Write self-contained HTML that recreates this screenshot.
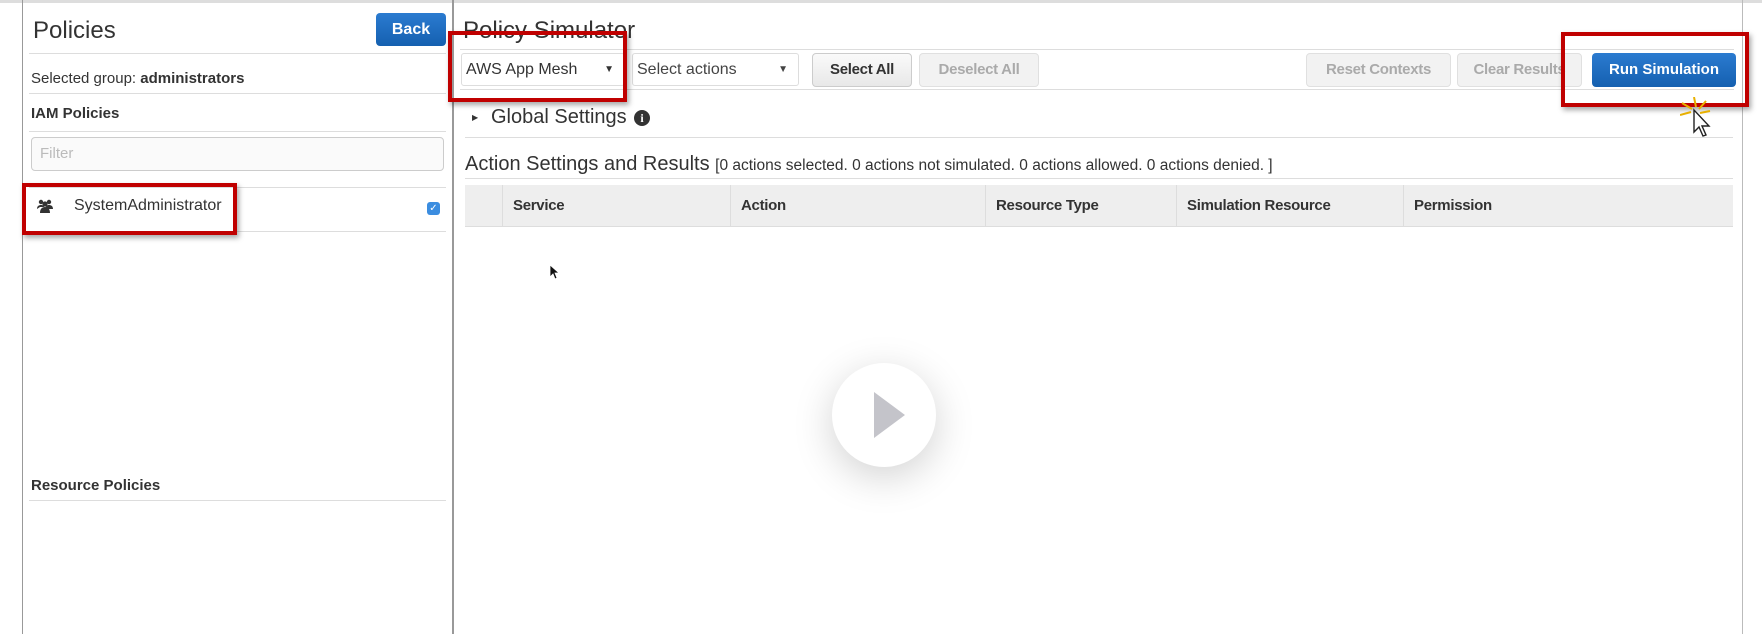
<!DOCTYPE html>
<html><head><meta charset="utf-8"><style>
*{box-sizing:border-box;margin:0;padding:0}
body{width:1762px;height:634px;background:#fff;position:relative;overflow:hidden;font-family:"Liberation Sans",Arial,sans-serif;color:#333}
.a{position:absolute}
.hl{position:absolute;height:1px;background:#ddd}
.btn{position:absolute;border:1px solid #ccc;border-radius:4px;background:linear-gradient(#fafafa,#e8e8e8);font-weight:bold;font-size:15px;text-align:center;letter-spacing:-0.3px}
.dis{color:#aaa;background:#f2f2f2;border-color:#e0e0e0}
.red{position:absolute;border:4px solid #c00000;box-shadow:2px 3px 5px rgba(0,0,0,.35)}
.th{position:absolute;top:185px;height:42px;line-height:42px;font-weight:bold;font-size:15px;border-left:1px solid #ddd;padding-left:10px;letter-spacing:-0.3px}
</style></head><body>
<div class="a" style="left:0;top:0;width:1762px;height:3px;background:#ddd"></div>
<div class="a" style="left:22px;top:0;width:1px;height:634px;background:#999"></div>
<div class="a" style="left:452px;top:0;width:2px;height:634px;background:#999"></div>
<div class="a" style="left:1742px;top:0;width:1px;height:634px;background:#bbb"></div>

<div class="a" style="left:33px;top:17px;font-size:24px;color:#333">Policies</div>
<div class="a" style="left:376px;top:13px;width:70px;height:33px;border-radius:4px;background:linear-gradient(#2b7bd0,#1560b0);color:#fff;font-weight:bold;font-size:16px;line-height:33px;text-align:center">Back</div>
<div class="hl" style="left:29px;top:53px;width:417px"></div>
<div class="a" style="left:31px;top:70px;font-size:15px">Selected group: <b>administrators</b></div>
<div class="hl" style="left:29px;top:93px;width:417px"></div>
<div class="a" style="left:31px;top:105px;font-size:15px;font-weight:bold">IAM Policies</div>
<div class="hl" style="left:29px;top:131px;width:417px"></div>
<div class="a" style="left:31px;top:137px;width:413px;height:34px;border:1px solid #ccc;border-radius:4px;background:#fafafa;color:#bbb;font-size:15px;line-height:32px;padding-left:8px">Filter</div>
<div class="hl" style="left:29px;top:187px;width:417px"></div>
<svg class="a" style="left:37px;top:199px" width="16" height="14" viewBox="0 0 16 14"><circle cx="4" cy="3" r="2.2" fill="#333"/><circle cx="12" cy="3" r="2.2" fill="#333"/><circle cx="8" cy="5" r="2.6" fill="#333"/><path d="M0 10c0-3 2-4 4-4s3 1 3 2H3z M9 8c0-1 1-2 3-2s4 1 4 4h-4z M3 14c0-4 2-6 5-6s5 2 5 6z" fill="#333"/></svg>
<div class="a" style="left:74px;top:197px;font-size:16px">SystemAdministrator</div>
<div class="a" style="left:427px;top:202px;width:13px;height:13px;border-radius:3px;background:#3b8de0;color:#fff;font-size:10px;line-height:13px;text-align:center">✓</div>
<div class="hl" style="left:29px;top:231px;width:417px"></div>
<div class="red" style="left:22px;top:183px;width:215px;height:52px"></div>

<div class="a" style="left:31px;top:477px;font-size:15px;font-weight:bold">Resource Policies</div>
<div class="hl" style="left:29px;top:500px;width:417px"></div>

<div class="a" style="left:463px;top:17px;font-size:24px;color:#333">Policy Simulator</div>
<div class="hl" style="left:460px;top:49px;width:1274px"></div>
<div class="hl" style="left:460px;top:89px;width:1274px"></div>
<div class="a" style="left:461px;top:53px;width:164px;height:33px;border:1px solid #ddd;border-radius:3px;font-size:16px;line-height:31px;padding-left:4px">AWS App Mesh<span style="position:absolute;right:10px;font-size:10px">▼</span></div>
<div class="a" style="left:632px;top:53px;width:167px;height:33px;border:1px solid #ddd;border-radius:3px;font-size:16px;line-height:31px;padding-left:4px;color:#444">Select actions<span style="position:absolute;right:10px;font-size:10px">▼</span></div>
<div class="btn" style="left:812px;top:53px;width:100px;height:34px;line-height:32px;color:#333">Select All</div>
<div class="btn dis" style="left:919px;top:53px;width:120px;height:34px;line-height:32px">Deselect All</div>
<div class="btn dis" style="left:1306px;top:53px;width:145px;height:34px;line-height:32px">Reset Contexts</div>
<div class="btn dis" style="left:1457px;top:53px;width:125px;height:34px;line-height:32px">Clear Results</div>
<div class="a" style="left:1592px;top:53px;width:144px;height:34px;border-radius:4px;background:linear-gradient(#2b7bd0,#1560b0);color:#fff;font-weight:bold;font-size:15px;line-height:34px;text-align:center">Run Simulation</div>
<div class="red" style="left:448px;top:31px;width:179px;height:71px"></div>
<div class="red" style="left:1561px;top:32px;width:188px;height:75px"></div>
<svg class="a" style="left:1680px;top:97px" width="40" height="46" viewBox="0 0 40 46"><path d="M14 0L16 10M2 6L12 12M0 18L11 15M26 4L19 12M30 14L20 16M20 26L17 18" stroke="#e8b000" stroke-width="2"/><path d="M14 13v22l5-5 4 9 3-1-4-9h7z" fill="#fff" stroke="#222" stroke-width="1.4"/></svg>

<div class="a" style="left:472px;top:113px;font-size:8px">▶</div>
<div class="a" style="left:491px;top:106px;font-size:20px;color:#333">Global Settings</div>
<div class="a" style="left:634px;top:110px;width:16px;height:16px;border-radius:50%;background:#333;color:#fff;font-size:12px;font-weight:bold;line-height:16px;text-align:center;font-family:'Liberation Serif',serif">i</div>
<div class="hl" style="left:465px;top:137px;width:1268px"></div>
<div class="a" style="left:465px;top:153px;font-size:20px;color:#333;white-space:nowrap">Action Settings and Results <span style="font-size:15.5px">[0 actions selected. 0 actions not simulated. 0 actions allowed. 0 actions denied. ]</span></div>
<div class="hl" style="left:465px;top:178px;width:1268px"></div>
<div class="a" style="left:465px;top:185px;width:1268px;height:42px;background:#eee;border-bottom:1px solid #ddd"></div>
<div class="th" style="left:502px">Service</div>
<div class="th" style="left:730px">Action</div>
<div class="th" style="left:985px">Resource Type</div>
<div class="th" style="left:1176px">Simulation Resource</div>
<div class="th" style="left:1403px">Permission</div>
<svg class="a" style="left:549px;top:264px" width="10" height="16" viewBox="0 0 10 16"><path d="M1 1v12l3-3 2 5 2-1-2-5h4z" fill="#111" stroke="#fff" stroke-width=".8"/></svg>

<div class="a" style="left:832px;top:363px;width:104px;height:104px;border-radius:50%;background:#fff;box-shadow:0 10px 40px rgba(0,0,0,.18)"></div>
<svg class="a" style="left:874px;top:392px" width="32" height="46" viewBox="0 0 32 46"><path d="M0 0L31 23L0 46z" fill="#c4c4ca"/></svg>
</body></html>
